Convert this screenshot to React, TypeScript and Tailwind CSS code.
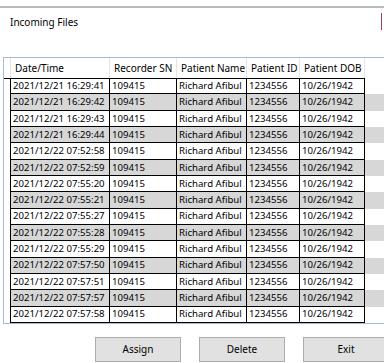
import React from 'react';

type Row = {
  time: string;
  sn: string;
  name: string;
  id: string;
  dob: string;
};

const times = [
  '2021/12/21 16:29:41',
  '2021/12/21 16:29:42',
  '2021/12/21 16:29:43',
  '2021/12/21 16:29:44',
  '2021/12/22 07:52:58',
  '2021/12/22 07:52:59',
  '2021/12/22 07:55:20',
  '2021/12/22 07:55:21',
  '2021/12/22 07:55:27',
  '2021/12/22 07:55:28',
  '2021/12/22 07:55:29',
  '2021/12/22 07:57:50',
  '2021/12/22 07:57:51',
  '2021/12/22 07:57:57',
  '2021/12/22 07:57:58',
];

const rows: Row[] = times.map((time) => ({
  time,
  sn: '109415',
  name: 'Richard Afibul',
  id: '1234556',
  dob: '10/26/1942',
}));

const cols = 'grid grid-cols-[7px_99px_67px_70px_53px_65px_1fr]';

const headers = ['Date/Time', 'Recorder SN', 'Patient Name', 'Patient ID', 'Patient DOB'];

const App: React.FC = () => {
  return (
    <div
      className="w-[384px] h-[363px] bg-white overflow-hidden text-[10px] text-black"
      style={{ fontFamily: '"Segoe UI", "Noto Sans", sans-serif' }}
    >
      <div className="pt-[6px]">
        <div className="h-[2px] bg-[#bababa]" />
      </div>

      <div className="flex justify-between items-start h-[49px]">
        <div className="pl-[10px] pt-[8px] leading-[12px]">Incoming Files</div>
        <div className="mt-[5px] mr-[2px] w-[1px] h-[17px] bg-[#9c3f55]" />
      </div>

      {/* grid */}
      <div className="ml-[3px] border-t border-l border-b border-[#a9bccf]">
        <div className={`${cols} h-[20px] bg-white`}>
          <div className="border-r border-[#e3e3e3]" />
          {headers.map((h) => (
            <div key={h} className="flex items-center border-r border-[#e3e3e3] pl-[4px]">
              {h}
            </div>
          ))}
          <div />
        </div>

        {rows.map((r, i) => {
          const bg = i % 2 === 1 ? 'bg-[#d7d7d7]' : 'bg-white';
          const top = i === 0 ? 'border-t' : '';
          return (
            <div key={r.time} className={`${cols} h-[16.33px]`}>
              <div className={`bg-white border-r border-black ${top}`} />
              {[r.time, r.sn, r.name, r.id, r.dob].map((v, j) => (
                <div
                  key={j}
                  className={`${bg} ${top} border-b border-r border-black flex items-center pl-[2px] text-[9.6px] leading-none whitespace-nowrap overflow-hidden`}
                >
                  {v}
                </div>
              ))}
              <div className={bg} />
            </div>
          );
        })}
      </div>

      <div className="flex pl-[95px] pt-[13px] gap-[18px]">
        {['Assign', 'Delete', 'Exit'].map((b) => (
          <button
            key={b}
            className="w-[86px] h-[25px] shrink-0 bg-[#e1e1e1] border border-[#adadad] flex items-center justify-center text-[10px]"
          >
            {b}
          </button>
        ))}
      </div>
    </div>
  );
};

export default App;
